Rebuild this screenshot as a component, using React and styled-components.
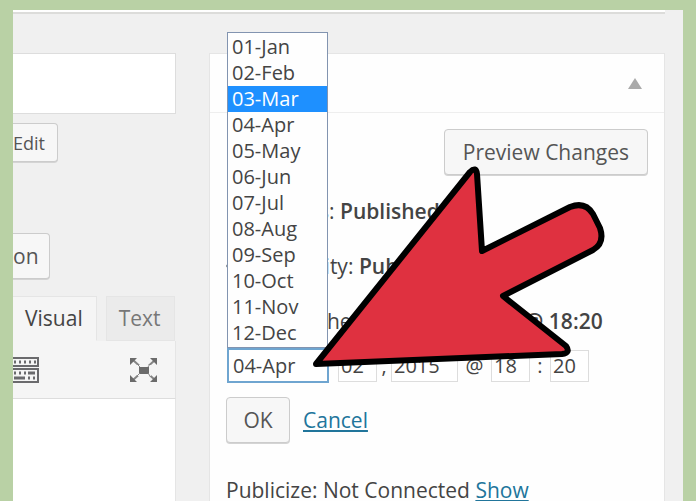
import React, { useState } from "react";
import styled, { createGlobalStyle } from "styled-components";

const months = [
    "01-Jan",
    "02-Feb",
    "03-Mar",
    "04-Apr",
    "05-May",
    "06-Jun",
    "07-Jul",
    "08-Aug",
    "09-Sep",
    "10-Oct",
    "11-Nov",
    "12-Dec",
];

const KeyboardIcon = () => (
    <svg width="26" height="26" viewBox="0 0 26 26" fill="none">
        <path d="M-2 1H25V9H-2ZM-2 12H25V25H-2Z" stroke="#6a6a6d" strokeWidth="2" />
        <path
            d="M1 5H3M6 5H8M11 5H13M16 5H18M21 5H23M1 16H3M6 16H8M11 16H13M15 16H22M1 21H12M15 21H17M20 21H22"
            stroke="#6a6a6d"
            strokeWidth="3"
        />
    </svg>
);

const ExpandIcon = () => (
    <svg width="28" height="26" viewBox="0 0 28 26">
        <path d="M3 3L25 23M25 3L3 23" stroke="#858585" strokeWidth="2" />
        <path d="M7 8H21V19H7Z" fill="#f5f5f5" />
        <path
            d="M0 1H7L0 8ZM27 1H20L27 8ZM0 25H7L0 18ZM27 25H20L27 18ZM9 10H19V17H9Z"
            fill="#6b6b6b"
        />
        <path d="M7 7L10 10M20 7L18 10M7 19L10 16M20 19L18 16" stroke="#858585" />
    </svg>
);

const PinIcon = () => (
    <svg width="24" height="24" viewBox="0 0 24 24" fill="#82878c">
        <path d="M8 3H16L15 10L18 14H13L12 21L11 14H6L9 10Z" />
    </svg>
);

const EyeIcon = () => (
    <svg width="24" height="24" viewBox="0 0 24 24" fill="none" stroke="#82878c" strokeWidth="2">
        <path d="M1 12C6 4 18 4 23 12C18 20 6 20 1 12Z" />
        <circle cx="12" cy="12" r="3" />
    </svg>
);

const CalendarIcon = () => (
    <svg width="24" height="24" viewBox="0 0 24 24" fill="none" stroke="#82878c" strokeWidth="2">
        <path d="M4 5H20V20H4ZM4 10H20M8 2V7M16 2V7" />
    </svg>
);

const PointerArrow = () => (
    <Pointer viewBox="308 162 300 210" aria-hidden="true">
        <path
            d="M316 364L470 172Q476 166 477 174L482 251L570 207Q585 201 593 214L600 228Q605 243 593 250L503 296L566 346Q571 353 562 354Z"
            fill="#df3140"
            stroke="#000"
            strokeWidth="6"
            strokeLinejoin="round"
        />
    </Pointer>
);

const EditorColumn = () => {
    const [tab, setTab] = useState("Visual");

    return (
        <Editor>
            <TitleInput aria-label="Title" />
            <CutButton type="button">Edit</CutButton>
            <MediaButton type="button">on</MediaButton>
            <Tabs role="tablist">
                {["Visual", "Text"].map((name) => (
                    <Tab
                        key={name}
                        type="button"
                        role="tab"
                        aria-selected={tab === name}
                        $active={tab === name}
                        onClick={() => setTab(name)}
                    >
                        {name}
                    </Tab>
                ))}
            </Tabs>
            <Toolbar>
                <IconButton type="button" aria-label="Toolbar toggle">
                    <KeyboardIcon />
                </IconButton>
                <IconButton type="button" aria-label="Full screen">
                    <ExpandIcon />
                </IconButton>
            </Toolbar>
            <Content aria-label="Content" />
        </Editor>
    );
};

const PublishPanel = () => {
    const [month, setMonth] = useState("04-Apr");
    const [hovered, setHovered] = useState("03-Mar");

    return (
        <Panel>
            <PanelHeader>
                <IconButton type="button" aria-label="Toggle panel">
                    <svg width="14" height="11" viewBox="0 0 14 11">
                        <path d="M7 0L14 11H0Z" fill="#aaa" />
                    </svg>
                </IconButton>
            </PanelHeader>
            <PanelBody>
                <PreviewButton type="button">Preview Changes</PreviewButton>
                <InfoRow>
                    <PinIcon />
                    <span>
                        Status: <b>Published</b>
                    </span>
                </InfoRow>
                <InfoRow>
                    <EyeIcon />
                    <span>
                        Visibility: <b>Public</b>
                    </span>
                </InfoRow>
                <InfoRow>
                    <CalendarIcon />
                    <span>
                        Published on: <b>Apr 2, 2015 @ 18:20</b>
                    </span>
                </InfoRow>
                <DateRow>
                    <MonthPicker>
                        <MonthSelect
                            aria-label="Month"
                            value={month}
                            onChange={(e) => setMonth(e.target.value)}
                        >
                            {months.map((item) => (
                                <option key={item}>{item}</option>
                            ))}
                        </MonthSelect>
                        <MonthList role="listbox" aria-label="Months">
                            {months.map((item) => (
                                <MonthOption
                                    key={item}
                                    role="option"
                                    aria-selected={item === month}
                                    $hovered={item === hovered}
                                    onMouseEnter={() => setHovered(item)}
                                    onClick={() => setMonth(item)}
                                >
                                    {item}
                                </MonthOption>
                            ))}
                        </MonthList>
                    </MonthPicker>
                    <DateInput aria-label="Day" defaultValue="02" />
                    <Separator $width={14}>,</Separator>
                    <DateInput aria-label="Year" defaultValue="2015" $wide />
                    <Separator $width={33}>@</Separator>
                    <DateInput aria-label="Hour" defaultValue="18" />
                    <Separator $width={20}>:</Separator>
                    <DateInput aria-label="Minute" defaultValue="20" />
                </DateRow>
                <Actions>
                    <OkButton type="button">OK</OkButton>
                    <Link href="#cancel">Cancel</Link>
                </Actions>
                <Publicize>
                    Publicize: Not Connected <Link href="#show">Show</Link>
                </Publicize>
            </PanelBody>
            <PointerArrow />
        </Panel>
    );
};

const App = () => (
    <Frame>
        <GlobalStyle />
        <Page>
            <TopPanel />
            <Columns>
                <EditorColumn />
                <PublishPanel />
            </Columns>
        </Page>
    </Frame>
);

export default App;

const GlobalStyle = createGlobalStyle`
    * {
        box-sizing: border-box;
    }
    body {
        margin: 0;
        overflow: hidden;
    }
    body, button, input, select, textarea {
        font-family: "Open Sans", sans-serif;
        color: #444;
    }
`;

const Frame = styled.div`
    display: flex;
    height: 100vh;
    padding: 10px 13px 0;
    background: #b9d1a5;
    overflow: hidden;
`;

const Page = styled.main`
    flex: 1;
    display: flex;
    flex-direction: column;
    background: #f0f0f0;
`;

const TopPanel = styled.div`
    flex: none;
    height: 4px;
    margin-right: 18px;
    background: #fff;
    border-bottom: 2px solid #dcdcda;
`;

const Columns = styled.div`
    flex: 1;
    display: flex;
    gap: 33px;
    padding: 39px 18px 0 0;
`;

const Editor = styled.section`
    flex: 0 0 163px;
    min-width: 0;
    display: flex;
    flex-direction: column;
    align-items: flex-start;
`;

const TitleInput = styled.input`
    width: 100%;
    height: 61px;
    border: 1px solid #ddd;
    border-left: 0;
    background: #fff;
    padding: 0 8px;
    font-size: 21px;
`;

const Button = styled.button`
    border: 1px solid #ccc;
    border-radius: 4px;
    background: #f7f7f7;
    box-shadow: 0 1px 0 #d4d4d4;
    font-size: 21px;
    color: #555;
    padding: 0;
`;

/* buttons that run off the left edge of the page */
const CutButton = styled(Button)`
    width: 45px;
    height: 39px;
    margin-top: 9px;
    border-left: 0;
    border-radius: 0 4px 4px 0;
    font-size: 18px;
    text-align: left;
`;

const MediaButton = styled(CutButton)`
    width: 37px;
    height: 46px;
    margin-top: 71px;
    font-size: 21px;
`;

const Tabs = styled.div`
    display: flex;
    gap: 9px;
    margin-top: 17px;
`;

const Tab = styled.button`
    height: 45px;
    padding: 0 13px 2px 12px;
    border: 1px solid #e5e5e5;
    border-left-width: ${(p) => (p.$active ? 0 : "1px")};
    border-bottom-color: ${(p) => (p.$active ? "#f5f5f5" : "#e5e5e5")};
    background: ${(p) => (p.$active ? "#f5f5f5" : "#ebebeb")};
    color: ${(p) => (p.$active ? "#444" : "#777")};
    font-size: 21px;
`;

const Toolbar = styled.div`
    display: flex;
    align-items: center;
    justify-content: space-between;
    width: 100%;
    height: 58px;
    padding-right: 17px;
    background: #f5f5f5;
    border-right: 1px solid #e5e5e5;
    border-bottom: 1px solid #ddd;
`;

const IconButton = styled.button`
    display: flex;
    padding: 0;
    border: 0;
    background: none;
`;

const Content = styled.textarea`
    flex: 1;
    width: 100%;
    border: 0;
    border-right: 1px solid #e5e5e5;
    background: #fff;
    resize: none;
`;

const Panel = styled.section`
    position: relative;
    flex: 1;
    background: #fefefe;
    border: 1px solid #e5e5e5;
`;

const PanelHeader = styled.header`
    display: flex;
    align-items: center;
    justify-content: flex-end;
    height: 59px;
    padding-right: 22px;
    border-bottom: 1px solid #eee;
`;

const PanelBody = styled.div`
    display: flex;
    flex-direction: column;
    padding: 16px;
    font-size: 21px;
    line-height: 30px;
`;

const PreviewButton = styled(Button)`
    align-self: flex-end;
    height: 46px;
    padding: 0 18px;
    margin-bottom: 8px;
`;

const InfoRow = styled.div`
    display: flex;
    align-items: center;
    gap: 18px;
    height: 55px;
    white-space: nowrap;

    b {
        font-weight: 600;
    }
`;

const DateRow = styled.div`
    display: flex;
    align-items: center;
    height: 35px;
    padding-left: 1px;
`;

const MonthPicker = styled.div`
    position: relative;
    width: 102px;
    height: 35px;
    margin-right: 9px;
`;

const MonthSelect = styled.select`
    appearance: none;
    width: 100%;
    height: 100%;
    padding: 0 4px;
    border: 2px solid #6fa5d0;
    background: #fff;
    font-size: 20px;
`;

const MonthList = styled.ul`
    position: absolute;
    bottom: 100%;
    left: 0;
    width: 101px;
    margin: 0;
    padding: 1px 0;
    list-style: none;
    background: #fefefe;
    border: 1px solid #8294b0;
`;

const MonthOption = styled.li`
    height: 26px;
    padding-left: 4px;
    font-size: 20px;
    line-height: 26px;
    color: ${(p) => (p.$hovered ? "#fff" : "#444")};
    background: ${(p) => (p.$hovered ? "#1e90ff" : "transparent")};
`;

const DateInput = styled.input`
    width: ${(p) => (p.$wide ? "67px" : "39px")};
    height: 32px;
    padding: 0 2px;
    border: 1px solid #ddd;
    background: #fff;
    font-size: 20px;
`;

const Separator = styled.span`
    width: ${(p) => p.$width}px;
    font-size: 20px;
    text-align: center;
`;

const Actions = styled.div`
    display: flex;
    align-items: center;
    gap: 13px;
    margin: 14px 0 32px;
`;

const OkButton = styled(Button)`
    width: 64px;
    height: 46px;
`;

const Link = styled.a`
    color: #21759b;
    text-decoration: underline;
`;

const Publicize = styled.div`
    white-space: nowrap;
`;

const Pointer = styled.svg`
    position: absolute;
    top: 108px;
    left: 98px;
    width: 300px;
    height: 210px;
    pointer-events: none;
`;
